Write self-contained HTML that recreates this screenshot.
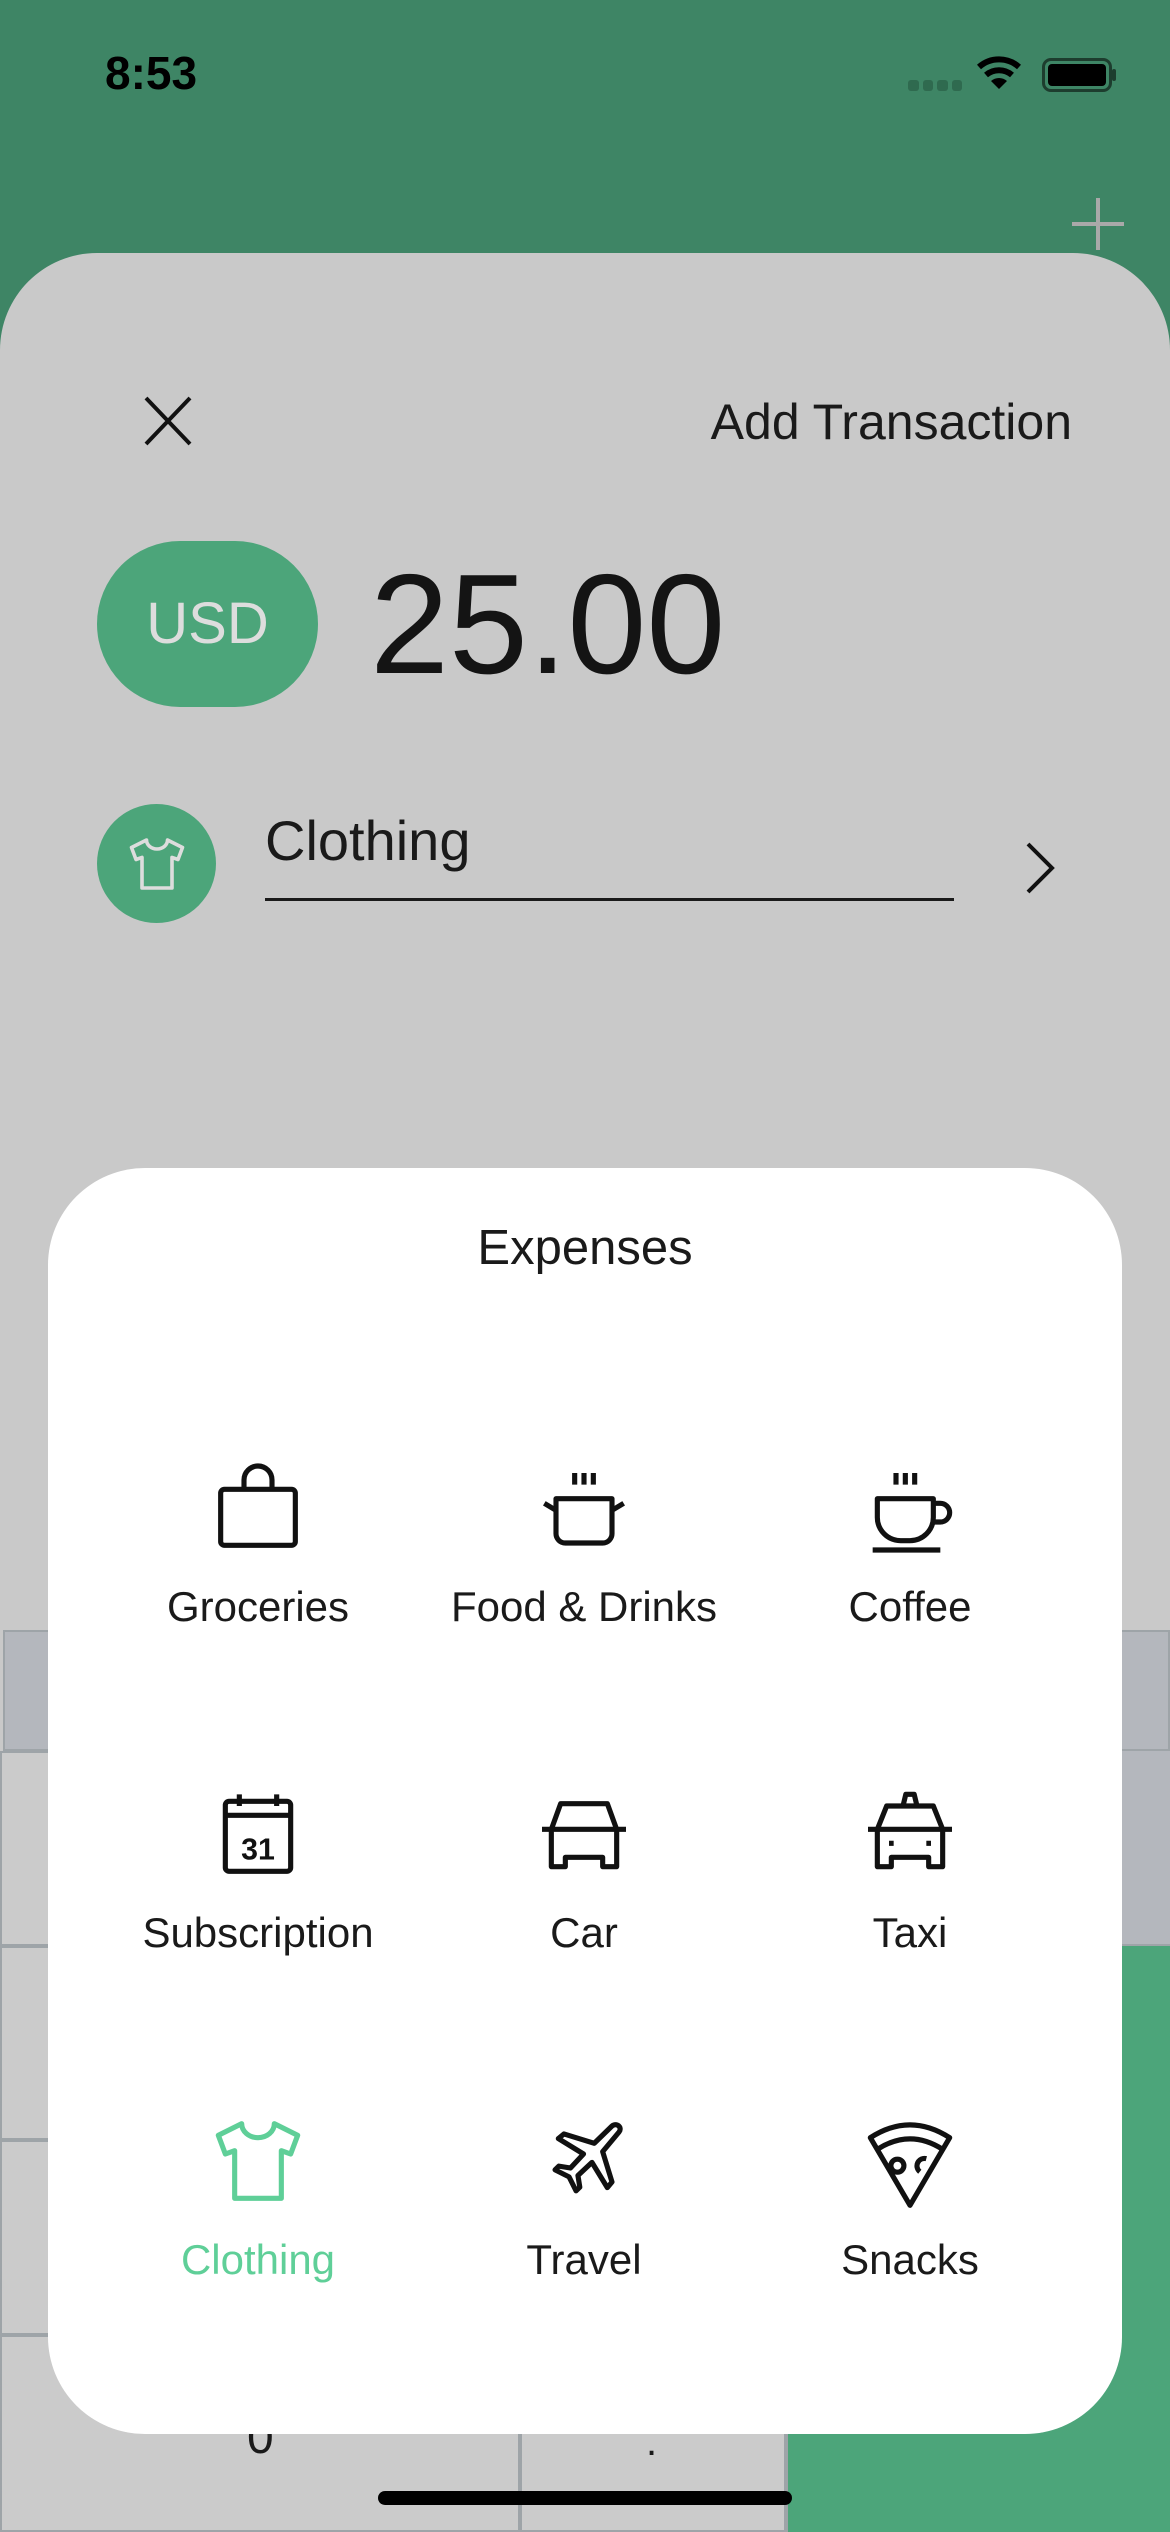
<!DOCTYPE html>
<html><head><meta charset="utf-8"><style>
*{margin:0;padding:0;box-sizing:border-box}
body{width:1170px;height:2532px;position:relative;overflow:hidden;background:#3e8565;font-family:"Liberation Sans",sans-serif;color:#1a1a1a}
.abs{position:absolute}
.sheet{left:0;top:253px;width:1170px;height:2279px;background:#c9c9c9;border-radius:97px 97px 0 0}
.key{position:absolute;border:2px solid #9ea4a8}
.card{left:48px;top:1168px;width:1074px;height:1266px;background:#fff;border-radius:97px}
.cell{position:absolute;width:326px;text-align:center;font-size:42px;color:#1a1a1a}
.cell svg{display:block;margin:0 auto 19px}
</style></head><body>
<div class="abs" style="left:105px;top:46px;font-size:46px;font-weight:bold;color:#000">8:53</div>
<div class="abs" style="left:908px;top:80px;width:54px;height:12px;display:flex;gap:4px"><i style="width:11px;height:11px;background:#2f6a4f;border-radius:3px"></i><i style="width:11px;height:11px;background:#2f6a4f;border-radius:3px"></i><i style="width:11px;height:11px;background:#2f6a4f;border-radius:3px"></i><i style="width:11px;height:11px;background:#2f6a4f;border-radius:3px"></i></div>
<svg class="abs" style="left:975px;top:55px" width="48" height="36" viewBox="0 0 48 36"><path d="M4 12 A30 30 0 0 1 44 12" stroke="#000" stroke-width="6" fill="none"/><path d="M11 20 A20 20 0 0 1 37 20" stroke="#000" stroke-width="6" fill="none"/><path d="M24 34 L16 26 A12 12 0 0 1 32 26Z" fill="#000"/></svg>
<div class="abs" style="left:1042px;top:58px;width:70px;height:34px;border:3px solid #1d3d2e;border-radius:9px;padding:3px"><div style="width:100%;height:100%;background:#000;border-radius:4px"></div></div>
<div class="abs" style="left:1112px;top:69px;width:4px;height:12px;background:#1d3d2e;border-radius:2px"></div>
<svg class="abs" style="left:1070px;top:196px" width="56" height="56"><path d="M28 2V54M2 28H54" stroke="#a9a9a9" stroke-width="4"/></svg>
<div class="abs sheet"></div>
<svg class="abs" style="left:144px;top:396px" width="48" height="50"><path d="M2 2L46 48M46 2L2 48" stroke="#111" stroke-width="4"/></svg>
<div class="abs" style="right:98px;top:393px;font-size:50px;color:#1a1a1a">Add Transaction</div>
<div class="abs" style="left:97px;top:541px;width:221px;height:166px;background:#4ca57a;border-radius:83px;color:#ddd;font-size:58px;text-align:center;line-height:166px">USD</div>
<div class="abs" style="left:370px;top:545px;font-size:142px;color:#141414;line-height:160px">25.00</div>
<div class="abs" style="left:97px;top:804px;width:119px;height:119px;background:#4ca57a;border-radius:50%"></div>
<svg class="abs" style="left:121px;top:828px" width="72" height="72" viewBox="0 0 24 24"><path d="M8.5 4L3.5 6.5 5 10.5 7 9.8V20h10V9.8l2 .7 1.5-4-5-2.5a3.5 3 0 0 1-7 0z" fill="none" stroke="#ddd" stroke-width="1.2" stroke-linejoin="round"/></svg>
<div class="abs" style="left:265px;top:808px;font-size:56px;color:#1a1a1a">Clothing</div>
<div class="abs" style="left:265px;top:898px;width:689px;height:3px;background:#1a1a1a"></div>
<svg class="abs" style="left:1024px;top:840px" width="34" height="56"><path d="M4 4L28 28 4 52" stroke="#111" stroke-width="4" fill="none"/></svg>
<div class="key" style="left:3px;top:1630px;width:1167px;height:121px;background:#b4b7bd"></div>
<div class="key" style="left:0;top:1751px;width:1170px;height:195px;background:#cbcbcb"></div>
<div class="key" style="left:0;top:1946px;width:786px;height:194px;background:#cbcbcb"></div>
<div class="key" style="left:0;top:2140px;width:786px;height:195px;background:#cbcbcb"></div>
<div class="key" style="left:0;top:2335px;width:520px;height:197px;background:#cbcbcb"></div>
<div class="key" style="left:520px;top:2335px;width:266px;height:197px;background:#cbcbcb"></div>
<div class="abs" style="left:1122px;top:1751px;width:48px;height:195px;background:#b4b7bd;border-bottom:2px solid #9ea4a8"></div>
<div class="abs" style="left:786px;top:1946px;width:384px;height:586px;background:#4ca57a;border-left:2px solid #9ea4a8"></div>
<div class="abs" style="left:247px;top:2410px;font-size:48px">0</div>
<div class="abs" style="left:646px;top:2420px;font-size:40px">.</div>
<div class="abs card"></div>
<div class="abs" style="left:48px;width:1074px;top:1220px;text-align:center;font-size:49px;color:#1a1a1a">Expenses</div>
<div class="cell" style="left:95px;top:1452px"><svg width="112" height="112" viewBox="0 0 24 24" fill="none" stroke="#111" stroke-width="1.1" stroke-linejoin="round"><rect x="4" y="8" width="16" height="12" rx=".8"/><path d="M9 8V6a3 3 0 0 1 6 0v2"/></svg>Groceries</div>
<div class="cell" style="left:421px;top:1452px"><svg width="112" height="112" viewBox="0 0 24 24" fill="none" stroke="#111" stroke-width="1.1" stroke-linejoin="round"><path d="M6 10h12v7.5a2 2 0 0 1-2 2H8a2 2 0 0 1-2-2z"/><path d="M6 12.5L3.5 11M18 12.5l2.5-1.5M10 4.5v2.5M12 4.5v2.5M14 4.5v2.5"/></svg>Food &amp; Drinks</div>
<div class="cell" style="left:747px;top:1452px"><svg width="112" height="112" viewBox="0 0 24 24" fill="none" stroke="#111" stroke-width="1.1" stroke-linejoin="round"><path d="M5 10h12v4a5 5 0 0 1-5 5h-2a5 5 0 0 1-5-5z"/><path d="M17 11h1.5a2 2 0 0 1 0 4H16.5M4 21h14.5M9 4.5V7M11 4.5V7M13 4.5V7"/></svg>Coffee</div>
<div class="cell" style="left:95px;top:1778px"><svg width="112" height="112" viewBox="0 0 24 24" fill="none" stroke="#111" stroke-width="1.1" stroke-linejoin="round"><rect x="5" y="5" width="14" height="15" rx=".8"/><path d="M5 8h14M8 3.5V6M16 3.5V6"/><text x="12" y="17.5" font-size="6.5" font-weight="bold" fill="#111" stroke="none" text-anchor="middle" font-family="Liberation Sans">31</text></svg>Subscription</div>
<div class="cell" style="left:421px;top:1778px"><svg width="112" height="112" viewBox="0 0 24 24" fill="none" stroke="#111" stroke-width="1.1" stroke-linejoin="round"><path d="M5 11l2-5.5h10l2 5.5M3 11h18M5 11v8h3v-2h8v2h3v-8"/></svg>Car</div>
<div class="cell" style="left:747px;top:1778px"><svg width="112" height="112" viewBox="0 0 24 24" fill="none" stroke="#111" stroke-width="1.1" stroke-linejoin="round"><path d="M5 11l2-5h10l2 5M3 11h18M5 11v8h3v-2h8v2h3v-8M10.5 6l.6-2.5h1.8l.6 2.5M7.5 14h1M15.5 14h1"/></svg>Taxi</div>
<div class="cell" style="left:95px;top:2105px;color:#5fcf98"><svg width="112" height="112" viewBox="0 0 24 24" fill="none" stroke="#5fcf98" stroke-width="1.1" stroke-linejoin="round"><path d="M8.5 4L3.5 6.5 5 10.5 7 9.8V20h10V9.8l2 .7 1.5-4-5-2.5a3.5 3 0 0 1-7 0z"/></svg>Clothing</div>
<div class="cell" style="left:421px;top:2105px"><svg width="112" height="112" viewBox="0 0 24 24" fill="none" stroke="#111" stroke-width="1.1" stroke-linejoin="round"><path d="M18 4.5c1-.8 2.3.3 1.5 1.3L16 10l2 6.5-1 1.2-3.3-5.4-3 2.8.4 2.5-.8.8-1.5-3-3-1.5.8-.8 2.5.4 2.8-3-5.4-3.3 1.2-1 6.5 2z"/></svg>Travel</div>
<div class="cell" style="left:747px;top:2105px"><svg width="112" height="112" viewBox="0 0 24 24" fill="none" stroke="#111" stroke-width="1.1" stroke-linejoin="round"><path d="M3.5 7Q12 1.5 20.5 7L12 21.5z"/><path d="M5 9.5Q12 5 19 9.5"/><circle cx="9.3" cy="13" r="1.4"/><path d="M15.5 11.5a1.6 1.6 0 0 0-1.4 2.8"/></svg>Snacks</div>
<div class="abs" style="left:378px;top:2491px;width:414px;height:14px;background:#000;border-radius:7px"></div>
</body></html>
